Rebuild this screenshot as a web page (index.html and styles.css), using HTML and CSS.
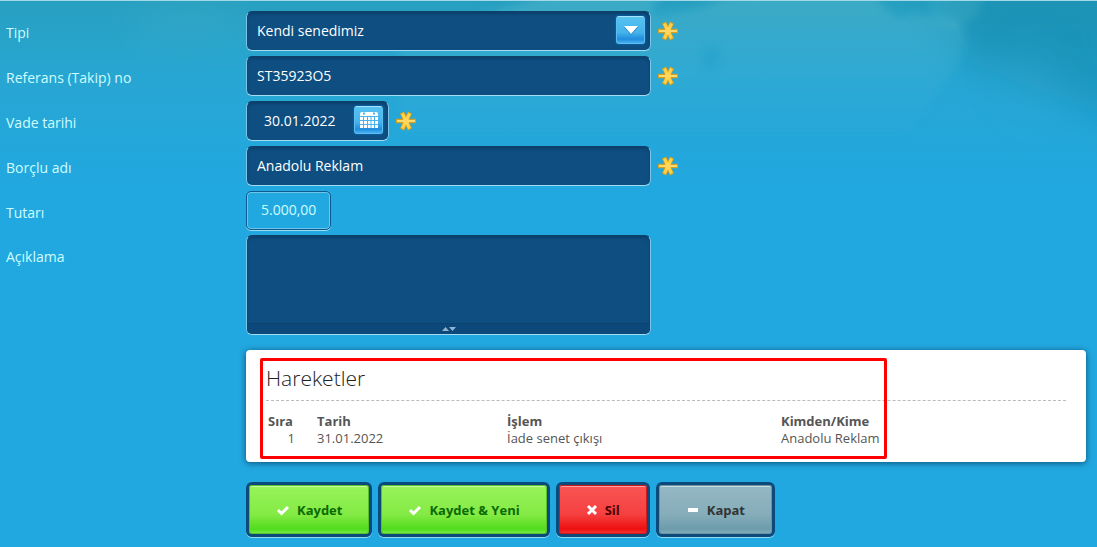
FILE: index.html
```html
<!DOCTYPE html>
<html lang="tr">
<head>
<meta charset="utf-8">
<title>Senet</title>
<link rel="stylesheet" href="styles.css">
</head>
<body>

<!-- sky -->
<svg class="sky" viewBox="0 0 1097 260" preserveAspectRatio="none" aria-hidden="true">
  <defs>
    <filter id="soft" x="-30%" y="-30%" width="160%" height="160%"><feGaussianBlur stdDeviation="4"/></filter>
    <filter id="wide" x="-100%" y="-100%" width="300%" height="300%"><feGaussianBlur stdDeviation="20"/></filter>
    <linearGradient id="cloud" x1="0" y1="0" x2="0" y2="1">
      <stop offset="0" stop-color="#6cc4d2" stop-opacity=".34"/>
      <stop offset="1" stop-color="#3fb2dc" stop-opacity="0"/>
    </linearGradient>
  </defs>
  <path d="M930-20H1130V120L1040 90L970 60Z" fill="#0b83a6" opacity=".45" filter="url(#wide)"/>
  <path d="M560-10H660L650 16Q680 12 705 6Q730-10 770-10H870Q885 8 898 18Q915 10 930 16Q960 14 964 34Q965 60 945 80L900 150H400V40Z" fill="url(#cloud)" filter="url(#soft)"/>
  <path d="M930-10H985L978 14L955 30L930 16Z" fill="#5fbfd2" opacity=".2" filter="url(#soft)"/>
  <path d="M1000 60L1040 38L1050 70L1070 90L1060 120L1010 100Z" fill="#3fb2dc" opacity=".2" filter="url(#wide)"/>
  <path d="M704 50Q712 40 722 52L716 66Q705 74 702 62Z" fill="#1798c6" opacity=".3" filter="url(#soft)"/>
  <ellipse cx="190" cy="20" rx="60" ry="26" fill="#5fbfd2" opacity=".15" filter="url(#wide)"/>
</svg>

<!-- shared icon -->
<svg width="0" height="0" class="defs" aria-hidden="true">
  <defs>
    <symbol id="star" viewBox="0 0 20 20">
      <g fill="none">
        <path d="M6 1.500L14 18.500M14 1.500L6 18.500M0 10H20" stroke="#d3a021" stroke-width="4.600"/>
        <path d="M6.400 2.500L13.600 17.500M13.600 2.500L6.400 17.500" stroke="#fdd24a" stroke-width="3"/>
        <path d="M1 10H19" stroke="#ffe27a" stroke-width="1.800"/>
        <circle cx="10" cy="10" r="3" fill="#ffd75c"/>
      </g>
    </symbol>
  </defs>
</svg>

<form class="form">
  <div class="row">
    <label for="tipi">Tipi</label>
    <div class="field">
      <select id="tipi">
        <option>Kendi senedimiz</option>
      </select>
      <span class="square arrow">
        <svg width="16" height="10" viewBox="0 0 16 10"><path d="M1 2H15L8 10Z" fill="#1c7fc4"/><path d="M1 1H15L8 9Z" fill="#fff"/></svg>
      </span>
    </div>
    <svg class="star"><use href="#star"/></svg>
  </div>

  <div class="row">
    <label for="referans">Referans (Takip) no</label>
    <div class="field">
      <input type="text" id="referans" value="ST35923O5">
    </div>
    <svg class="star"><use href="#star"/></svg>
  </div>

  <div class="row">
    <label for="vade">Vade tarihi</label>
    <div class="field date">
      <input type="text" id="vade" value="30.01.2022">
      <button type="button" class="square" aria-label="Takvim">
        <svg width="20" height="18" viewBox="0 0 20 18">
          <path d="M3 1H17Q19 1 19 3V17H1V3Q1 1 3 1Z" fill="#fff"/>
          <path d="M1 5.500H19M1 9.500H19M1 13.500H19M4.500 5V17M8.500 5V17M12 5V17M15.500 5V17" stroke="#4bb3ec" stroke-width="1"/>
          <path d="M4 2.500H6M14 2.500H16" stroke="#4bb3ec" stroke-width="2"/>
        </svg>
      </button>
    </div>
    <svg class="star"><use href="#star"/></svg>
  </div>

  <div class="row">
    <label for="borclu">Borçlu adı</label>
    <div class="field">
      <input type="text" id="borclu" value="Anadolu Reklam">
    </div>
    <svg class="star"><use href="#star"/></svg>
  </div>

  <div class="row">
    <label for="tutar">Tutarı</label>
    <input type="text" id="tutar" class="amount" value="5.000,00" readonly>
  </div>

  <div class="row top">
    <label for="aciklama">Açıklama</label>
    <div class="field area">
      <textarea id="aciklama"></textarea>
      <div class="grip">
        <svg width="14" height="6" viewBox="0 0 14 6"><path d="M0 5L3.500 1L7 5ZM7 1H14L10.500 5Z" fill="#8fb4d0"/></svg>
      </div>
    </div>
  </div>

  <div class="panel">
    <h2>Hareketler</h2>
    <table>
      <thead>
        <tr>
          <th class="no">Sıra</th>
          <th class="tarih">Tarih</th>
          <th class="islem">İşlem</th>
          <th>Kimden/Kime</th>
        </tr>
      </thead>
      <tbody>
        <tr>
          <td class="no">1</td>
          <td>31.01.2022</td>
          <td>İade senet çıkışı</td>
          <td>Anadolu Reklam</td>
        </tr>
      </tbody>
    </table>
    <div class="highlight"></div>
  </div>

  <div class="buttons">
    <button type="submit" class="btn green">
      <svg width="14" height="12" viewBox="0 0 14 12"><path d="M2 6L5.500 9.500L12 3" stroke="#fff" stroke-width="3" fill="none"/></svg>
      Kaydet
    </button>
    <button type="submit" class="btn green">
      <svg width="14" height="12" viewBox="0 0 14 12"><path d="M2 6L5.500 9.500L12 3" stroke="#fff" stroke-width="3" fill="none"/></svg>
      Kaydet &amp; Yeni
    </button>
    <button type="button" class="btn red">
      <svg width="12" height="12" viewBox="0 0 12 12"><path d="M2 2L10 10M10 2L2 10" stroke="#fff" stroke-width="3" fill="none"/></svg>
      Sil
    </button>
    <button type="button" class="btn gray">
      <svg width="14" height="12" viewBox="0 0 14 12"><path d="M2 6H12" stroke="#fff" stroke-width="4"/></svg>
      Kapat
    </button>
  </div>
</form>

</body>
</html>
```
FILE: styles.css
```css
* {
    box-sizing: border-box;
}

body {
    margin: 0;
    border-top: 1px solid #a3d9e6;
    background: #21a8e0 linear-gradient(#279fbf, #28a6d2 70px, #21a8e0 190px) no-repeat;
    font-family: "Segoe UI", "Open Sans", "Noto Sans", sans-serif;
    font-size: 14px;
    color: #fff;
}

input, select, textarea, button {
    font: inherit;
    color: inherit;
}

.sky {
    position: absolute;
    top: 1px;
    left: 0;
    width: 100%;
    height: 260px;
    z-index: -1;
}

.defs {
    position: absolute;
}

.form {
    display: flex;
    flex-direction: column;
    gap: 5px;
    padding: 10px 11px 8px 6px;
}

.row {
    display: flex;
    align-items: center;
}

.row label {
    width: 240px;
    padding-top: 3px;
    color: #cffcff;
}

.row.top {
    align-items: flex-start;
}

.row.top label {
    padding-top: 12px;
}

.field {
    position: relative;
    display: flex;
    align-items: center;
    width: 405px;
    height: 40px;
    border: 1px solid #7cc4e8;
    border-top-color: #0e4068;
    border-bottom-color: #a5dcf3;
    border-radius: 6px;
    background: #0e4e80;
    box-shadow: inset 0 2px 3px #0b406b;
}

.field input,
.field select,
.field textarea {
    flex: 1;
    min-width: 0;
    height: 100%;
    padding: 0 10px 2px;
    border: 0;
    outline: 0;
    background: none;
    appearance: none;
}

.field.date {
    width: 143px;
}

.field.date input {
    padding: 0 0 2px 17px;
}

.square {
    display: flex;
    align-items: center;
    justify-content: center;
    width: 29px;
    height: 28px;
    margin: 0 5px 2px 0;
    padding: 0;
    border: 1px solid #5bbdf0;
    border-top-color: #a5e4fb;
    border-radius: 3px;
    background: linear-gradient(#56c3f1, #45b2ec 60%, #1f8ddd 85%, #46b0ef);
    box-shadow: 0 0 2px 1px #0b5e9c;
}

.square.arrow {
    position: absolute;
    right: 0;
    pointer-events: none;
}

.star {
    width: 20px;
    height: 20px;
    margin-left: 7px;
}

.amount {
    width: 85px;
    height: 39px;
    padding: 0 0 2px 14px;
    border: 1px solid #0e5a90;
    border-radius: 5px;
    outline: 0;
    background: none;
    color: #cffcff;
    box-shadow: inset 0 0 0 1px #6cc6ea, 0 1px 0 #9bdcf4;
}

.field.area {
    display: block;
    height: 100px;
    overflow: hidden;
}

.field.area textarea {
    display: block;
    width: 100%;
    height: 87px;
    padding: 8px 10px;
    resize: none;
}

.grip {
    display: flex;
    align-items: center;
    justify-content: center;
    height: 11px;
    border-top: 1px solid #0c426f;
    background: #0d487a;
}

.panel {
    position: relative;
    margin: 10px 0 0 240px;
    padding: 12px 20px 15px;
    border-radius: 4px;
    background: #fff;
    color: #555;
    box-shadow: 0 1px 6px rgba(0, 40, 70, .7);
}

.panel h2 {
    margin: 0 0 12px;
    padding-bottom: 6px;
    border-bottom: 1px dashed #bbb;
    color: #222;
    font-size: 21px;
    font-weight: 300;
    line-height: 32px;
}

.panel table {
    width: 100%;
    border-collapse: collapse;
    font-size: 13px;
    line-height: 17px;
}

.panel th,
.panel td {
    padding: 0;
    text-align: left;
}

.panel .no {
    width: 51px;
    padding-left: 2px;
}

.panel td.no {
    padding-right: 22px;
    text-align: right;
}

.panel .tarih {
    width: 190px;
}

.panel .islem {
    width: 274px;
}

.highlight {
    position: absolute;
    top: 8px;
    left: 14px;
    width: 627px;
    height: 101px;
    border: 3px solid #f00;
    border-radius: 2px;
}

.buttons {
    display: flex;
    gap: 6px;
    margin: 15px 0 0 240px;
}

.btn {
    display: flex;
    align-items: center;
    gap: 7px;
    height: 55px;
    padding: 0 27px;
    border: 3px solid #0d4a7c;
    border-radius: 6px;
    font-size: 13px;
    font-weight: bold;
}

.green {
    background: linear-gradient(#98f45a, #84ea45 60%, #52dc1d 90%, #7cec4c);
    box-shadow: inset 0 0 0 1px #58c22c, inset 0 2px 0 #c8fba4, 0 1px 0 #8fdcf2;
    color: #0a6a00;
}

.red {
    background: linear-gradient(#fa5555, #f54040 60%, #ee0f0f 90%, #f53b3b);
    box-shadow: inset 0 0 0 1px #d01818, inset 0 2px 0 #ffa0a0, 0 1px 0 #8fdcf2;
    color: #4d0000;
}

.gray {
    background: linear-gradient(#95b8c4, #86adba 60%, #6c9cab 90%, #86afbb);
    box-shadow: inset 0 0 0 1px #6a94a3, inset 0 2px 0 #c8dde4, 0 1px 0 #8fdcf2;
    color: #333;
}
```
